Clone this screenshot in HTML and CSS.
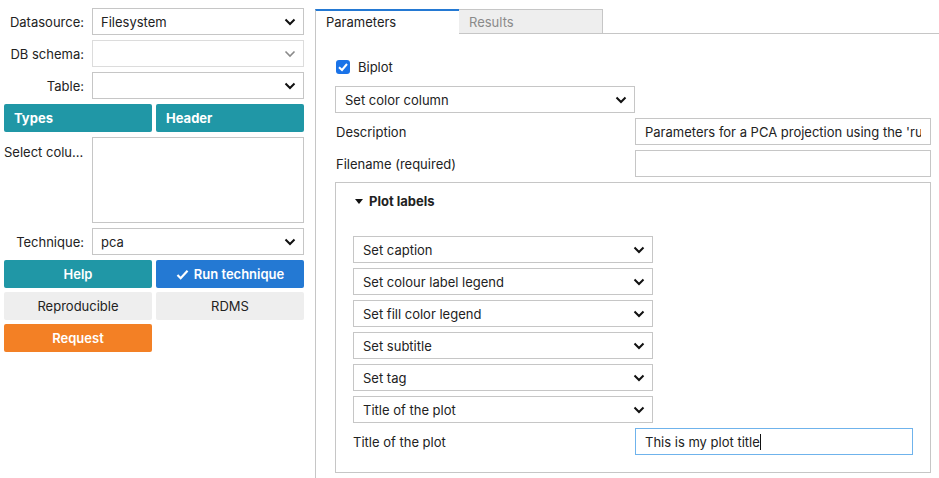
FILE: index.html
```html
<!DOCTYPE html>
<html>
<head>
<meta charset="utf-8">
<link rel="stylesheet" href="styles.css">
</head>
<body>
<div class="app">
  <div class="side">
    <div class="row">
      <div class="lbl">Datasource:</div>
      <div class="sel"><span>Filesystem</span><svg class="chev" viewBox="0 0 12 8"><path d="M1.5 1.5 L6 6 L10.5 1.5"/></svg></div>
    </div>
    <div class="row">
      <div class="lbl">DB schema:</div>
      <div class="sel disabled"><span></span><svg class="chev" viewBox="0 0 12 8"><path d="M1.5 1.5 L6 6 L10.5 1.5"/></svg></div>
    </div>
    <div class="row">
      <div class="lbl">Table:</div>
      <div class="sel"><span></span><svg class="chev" viewBox="0 0 12 8"><path d="M1.5 1.5 L6 6 L10.5 1.5"/></svg></div>
    </div>
    <div class="btns">
      <div class="btn teal left">Types</div>
      <div class="btn teal left">Header</div>
    </div>
    <div class="row tall">
      <div class="lbl top">Select colu...</div>
      <div class="area"></div>
    </div>
    <div class="row">
      <div class="lbl">Technique:</div>
      <div class="sel"><span>pca</span><svg class="chev" viewBox="0 0 12 8"><path d="M1.5 1.5 L6 6 L10.5 1.5"/></svg></div>
    </div>
    <div class="btns">
      <div class="btn teal">Help</div>
      <div class="btn blue"><svg class="check" viewBox="0 0 14 12"><path d="M1.5 6.5 L5 10 L12.5 2"/></svg>Run technique</div>
      <div class="btn gray">Reproducible</div>
      <div class="btn gray">RDMS</div>
      <div class="btn orange">Request</div>
    </div>
  </div>
  <div class="main">
    <div class="tabs">
      <div class="tab active">Parameters</div>
      <div class="tab">Results</div>
      <div class="tabfill"></div>
    </div>
    <div class="pane">
      <div class="checkrow">
        <span class="cbox"><svg viewBox="0 0 14 14"><path d="M3 7.2 L6 10 L11 4"/></svg></span>
        <span>Biplot</span>
      </div>
      <div class="sel wide"><span>Set color column</span><svg class="chev" viewBox="0 0 12 8"><path d="M1.5 1.5 L6 6 L10.5 1.5"/></svg></div>
      <div class="frow">
        <div class="flbl">Description</div>
        <div class="inp"><span class="clip">Parameters for a PCA projection using the 'rubber' dataset</span></div>
      </div>
      <div class="frow">
        <div class="flbl">Filename (required)</div>
        <div class="inp"></div>
      </div>
      <div class="box">
        <div class="summary"><span class="tri"></span>Plot labels</div>
        <div class="list">
          <div class="sel wide"><span>Set caption</span><svg class="chev" viewBox="0 0 12 8"><path d="M1.5 1.5 L6 6 L10.5 1.5"/></svg></div>
          <div class="sel wide"><span>Set colour label legend</span><svg class="chev" viewBox="0 0 12 8"><path d="M1.5 1.5 L6 6 L10.5 1.5"/></svg></div>
          <div class="sel wide"><span>Set fill color legend</span><svg class="chev" viewBox="0 0 12 8"><path d="M1.5 1.5 L6 6 L10.5 1.5"/></svg></div>
          <div class="sel wide"><span>Set subtitle</span><svg class="chev" viewBox="0 0 12 8"><path d="M1.5 1.5 L6 6 L10.5 1.5"/></svg></div>
          <div class="sel wide"><span>Set tag</span><svg class="chev" viewBox="0 0 12 8"><path d="M1.5 1.5 L6 6 L10.5 1.5"/></svg></div>
          <div class="sel wide"><span>Title of the plot</span><svg class="chev" viewBox="0 0 12 8"><path d="M1.5 1.5 L6 6 L10.5 1.5"/></svg></div>
          <div class="brow">
            <div class="flbl">Title of the plot</div>
            <div class="inp focus"><span>This is my plot title</span><span class="caret"></span></div>
          </div>
        </div>
      </div>
    </div>
  </div>
</div>
</body>
</html>
```

FILE: styles.css
```css
* { box-sizing: border-box; }
html, body { margin: 0; padding: 0; background: #fff; }
body {
  font-family: Inter, "Noto Sans", "Liberation Sans", sans-serif;
  font-size: 13px;
  color: #222;
  width: 939px;
  height: 478px;
  overflow: hidden;
}
.app { display: flex; height: 478px; }
.side {
  width: 315px;
  padding: 8px 11px 0 4px;
  display: flex;
  flex-direction: column;
  gap: 5px;
}
.row { display: flex; align-items: center; height: 27px; gap: 8px; }
.row.tall { height: 86px; align-items: flex-start; }
.lbl { width: 80px; text-align: right; white-space: nowrap; }
.lbl.top { text-align: left; padding-top: 7px; width: 80px; overflow: hidden; }
.sel {
  flex: 1;
  height: 27px;
  border: 1px solid #c6c6c6;
  background: #fff;
  display: flex;
  align-items: center;
  justify-content: space-between;
  padding: 0 7px 0 8px;
}
.sel .chev { width: 12px; height: 8px; fill: none; stroke: #111; stroke-width: 2; }
.sel.disabled { border-color: #dcdcdc; }
.sel.disabled .chev { stroke: #8a8a8a; stroke-width: 1.6; }
.area { flex: 1; height: 86px; border: 1px solid #c6c6c6; }
.btns {
  display: grid;
  grid-template-columns: 148px 148px;
  column-gap: 4px;
  row-gap: 4px;
}
.btn {
  height: 28px;
  border-radius: 2px;
  display: flex;
  align-items: center;
  justify-content: center;
  font-weight: 600;
  color: #fff;
}
.btn.left { justify-content: flex-start; padding-left: 10px; font-weight: 700; }
.teal { background: #2097a6; }
.blue { background: #2479d3; }
.orange { background: #f38025; }
.gray { background: #eeeeee; color: #222; font-weight: 400; }
.check { width: 13px; height: 11px; fill: none; stroke: #fff; stroke-width: 2.4; margin-right: 5px; }

.main { flex: 1; display: flex; flex-direction: column; }
.tabs { display: flex; height: 34px; padding-top: 9px; }
.tab {
  width: 144px;
  height: 25px;
  padding: 4px 0 0 10px;
  background: #eeeeee;
  color: #8a8a8a;
  border: 1px solid #c6c6c6;
  border-left: none;
}
.tab.active {
  background: #fff;
  color: #222;
  border: none;
  border-top: 2px solid #2479d3;
  border-left: 1px solid #c6c6c6;
  padding-top: 3px;
}
.tabfill { flex: 1; border-bottom: 1px solid #c6c6c6; }
.pane {
  flex: 1;
  border-left: 1px solid #c6c6c6;
  padding: 26px 8px 0 19px;
  display: flex;
  flex-direction: column;
}
.checkrow { display: flex; align-items: center; height: 14px; margin-left: 1px; }
.cbox {
  width: 14px; height: 14px;
  background: #1a73e8;
  border-radius: 3px;
  margin-right: 8px;
  display: inline-flex;
}
.cbox svg { width: 14px; height: 14px; fill: none; stroke: #fff; stroke-width: 2; }
.pane > .sel.wide { margin-top: 12px; }
.sel.wide { flex: none; width: 300px; padding-left: 9px; }
.frow { display: grid; grid-template-columns: 300px 296px; align-items: center; margin-top: 5px; }
.flbl { padding-left: 1px; }
.inp {
  height: 27px;
  border: 1px solid #c6c6c6;
  padding: 0 9px;
  display: flex;
  align-items: center;
  overflow: hidden;
  white-space: nowrap;
}
.clip { overflow: hidden; }
.inp.focus { border-color: #6fb3ec; }
.caret { width: 1px; height: 16px; background: #111; }
.box {
  margin-top: 5px;
  width: 596px;
  height: 291px;
  border: 1px solid #c6c6c6;
  padding: 10px 18px 0 17px;
}
.summary { font-weight: 700; display: flex; align-items: center; height: 16px; padding-left: 2px; }
.tri {
  width: 0; height: 0;
  border-left: 4px solid transparent;
  border-right: 4px solid transparent;
  border-top: 5px solid #111;
  margin-right: 6px;
}
.list { margin-top: 27px; display: flex; flex-direction: column; gap: 5px; }
.brow { display: grid; grid-template-columns: 282px 278px; align-items: center; }
.brow .flbl { padding-left: 0; }
```
